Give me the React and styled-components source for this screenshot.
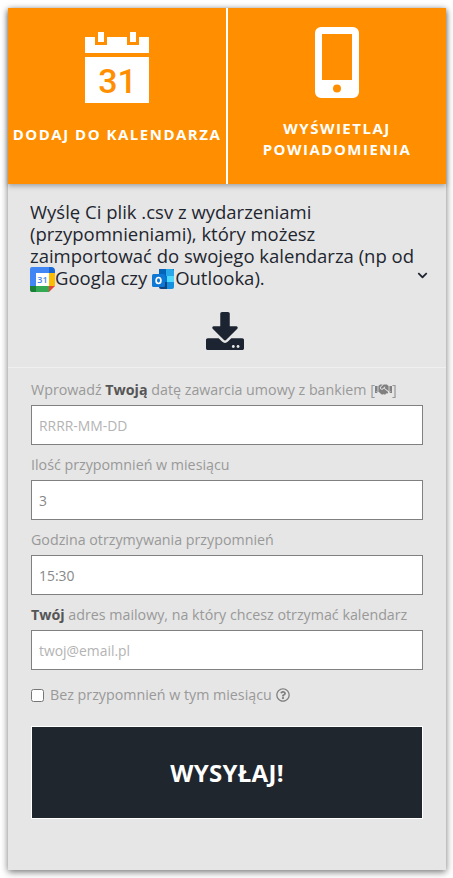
import React from "react";
import styled, { createGlobalStyle } from "styled-components";
import { FaDownload, FaHandshake, FaChevronDown, FaRegQuestionCircle } from "react-icons/fa";

const GlobalStyle = createGlobalStyle`
  * {
    box-sizing: border-box;
  }

  body {
    margin: 0;
    background: #fff;
    font-family: "Open Sans", "Liberation Sans", sans-serif;
  }
`;

const Page = styled.div`
  padding: 8px;
  min-height: 878px;
`;

const Card = styled.div`
  position: relative;
  width: 438px;
  height: 862px;
  background: #e6e6e6;
  box-shadow: 0 2px 7px rgba(0, 0, 0, 0.55);
`;

const Tabs = styled.div`
  display: grid;
  grid-template-columns: 218px 218px;
  gap: 2px;
  height: 176px;
  background: #fff;
  box-shadow: 0 2px 5px rgba(0, 0, 0, 0.3);
  position: relative;
`;

const Tab = styled.div`
  background: #ff8f00;
  color: #fff;
  display: flex;
  flex-direction: column;
  align-items: center;
  padding-top: ${(p) => p.$top}px;
`;

const TabLabel = styled.div`
  margin-top: ${(p) => p.$gap}px;
  font-size: 15px;
  line-height: 21px;
  font-weight: 700;
  letter-spacing: 1.5px;
  text-align: center;
  white-space: nowrap;
`;

const Intro = styled.div`
  position: relative;
  padding: 17px 22px 0;
  height: 184px;
  border-bottom: 1px solid #f0f0f0;
  display: flex;
  flex-direction: column;
`;

const IntroText = styled.p`
  margin: 0;
  font-size: 18.5px;
  line-height: 22px;
  color: #1f2630;
`;

const InlineIcon = styled.svg`
  display: inline-block;
  vertical-align: ${(p) => p.$align}px;
  margin-right: ${(p) => p.$right || 0}px;
`;

const Chevron = styled(FaChevronDown)`
  position: absolute;
  right: 18px;
  top: 86px;
  font-size: 11px;
  color: #1f2630;
`;

const DownloadRow = styled.div`
  display: flex;
  justify-content: center;
  margin-top: 20px;
  padding-right: 4px;
  color: #1b2430;
  font-size: 38px;
  line-height: 0;
`;

const Form = styled.form`
  padding: 9px 23px 0;
  display: flex;
  flex-direction: column;
`;

const Field = styled.div`
  display: flex;
  flex-direction: column;
  gap: 3px;
  margin-bottom: 7px;
`;

const Label = styled.label`
  font-size: 14.25px;
  line-height: 25px;
  color: #999;
  white-space: nowrap;

  b {
    color: #555;
    font-weight: 700;
  }
`;

const BankIcon = styled(FaHandshake)`
  font-size: 17px;
  color: #808080;
  vertical-align: -3px;
`;

const Input = styled.input`
  display: block;
  width: 100%;
  height: 40px;
  padding: 0 7px;
  background: #fff;
  border: 1px solid #808080;
  border-radius: 0;
  outline: none;
  font-family: inherit;
  font-size: 13.9px;
  color: #888;

  &::placeholder {
    color: #b3b3b3;
    opacity: 1;
  }
`;

const CheckRow = styled.div`
  display: flex;
  align-items: center;
  gap: 6px;
  margin-top: 5px;
  font-size: 14.25px;
  line-height: 25px;
  color: #999;
`;

const Check = styled.input`
  width: 13px;
  height: 13px;
  margin: 2px 0 0;
`;

const Help = styled(FaRegQuestionCircle)`
  font-size: 14px;
  color: #808080;
  margin-left: -2px;
`;

const Submit = styled.button`
  display: block;
  width: 100%;
  height: 93px;
  margin-top: 19px;
  background: #1f262e;
  border: 1px solid #fff;
  color: #fff;
  font-family: inherit;
  font-size: 24px;
  font-weight: 700;
  letter-spacing: 0.3px;
`;

function CalendarIcon() {
  return (
    <svg width="64" height="71" viewBox="0 0 64 71">
      <path fill="#fff" d="M0 5h10v8h12V5h20v8h12V5h10v16H0z" />
      <path fill="#fff" d="M13 0h6v10h-6zM45 0h6v10h-6z" />
      <rect y="25" width="64" height="46" fill="#fff" />
      <text
        x="32.500"
        y="61"
        fill="#ff8f00"
        fontFamily="Roboto, sans-serif"
        fontSize="34"
        fontWeight="500"
        textAnchor="middle"
      >
        31
      </text>
    </svg>
  );
}

function PhoneIcon() {
  return (
    <svg width="44" height="71" viewBox="0 0 44 71">
      <path
        fill="#fff"
        fillRule="evenodd"
        d="M6 0h32a6 6 0 0 1 6 6v59a6 6 0 0 1-6 6H6a6 6 0 0 1-6-6V6a6 6 0 0 1 6-6zM7 7v46h30V7zM22 57.500a4 4 0 1 0 0 8 4 4 0 0 0 0-8z"
      />
    </svg>
  );
}

function GoogleCalendarIcon() {
  return (
    <InlineIcon $align={-7} width="25" height="25" viewBox="0 0 25 25">
      <path fill="#4285f4" d="M2 0h17v6H6v13H0V2a2 2 0 0 1 2-2z" />
      <path fill="#1967d2" d="M19 0l0 6h6V4a4 4 0 0 0-4-4z" />
      <path fill="#fbbc04" d="M19 6h6v13h-6z" />
      <path fill="#34a853" d="M6 19h13v6H6z" />
      <path fill="#188038" d="M0 19h6v6H2a2 2 0 0 1-2-2z" />
      <path fill="#ea4335" d="M19 19h6l-6 6z" />
      <path fill="#fff" d="M6 6h13v13H6z" />
      <text x="12.500" y="16" fontSize="9" fontWeight="600" fill="#4285f4" textAnchor="middle">
        31
      </text>
    </InlineIcon>
  );
}

function OutlookIcon() {
  return (
    <InlineIcon $align={-4} $right={1} width="22" height="20" viewBox="0 0 22 20">
      <path fill="#0364b8" d="M7 0h15v7H7z" />
      <path fill="#28a8ea" d="M14 0h6a2 2 0 0 1 2 2v5h-8z" />
      <path fill="#0078d4" d="M7 7h15v6H7z" />
      <path fill="#50d9ff" d="M15 7h7v6h-7z" />
      <path fill="#14447d" d="M7 13h8v7H9a2 2 0 0 1-2-2z" />
      <path fill="#1490df" d="M15 13h7v5a2 2 0 0 1-2 2h-5z" />
      <rect y="5" width="13" height="13" rx="1.500" fill="#0f78d4" />
      <ellipse cx="6.500" cy="11.500" rx="2.400" ry="3" fill="none" stroke="#fff" strokeWidth="1.700" />
    </InlineIcon>
  );
}

export default function App() {
  return (
    <Page>
      <GlobalStyle />
      <Card>
        <Tabs>
          <Tab $top={24}>
            <CalendarIcon />
            <TabLabel $gap={21}>DODAJ DO KALENDARZA</TabLabel>
          </Tab>
          <Tab $top={19}>
            <PhoneIcon />
            <TabLabel $gap={20}>
              WYŚWIETLAJ
              <br />
              POWIADOMIENIA
            </TabLabel>
          </Tab>
        </Tabs>
        <Intro>
          <IntroText>
            Wyślę Ci plik .csv z wydarzeniami (przypomnieniami), który możesz zaimportować do swojego kalendarza (np od{" "}
            <GoogleCalendarIcon />
            Googla czy <OutlookIcon />
            Outlooka).
          </IntroText>
          <Chevron />
          <DownloadRow>
            <FaDownload />
          </DownloadRow>
        </Intro>
        <Form>
          <Field>
            <Label>
              Wprowadź <b>Twoją</b> datę zawarcia umowy z bankiem [<BankIcon />]
            </Label>
            <Input placeholder="RRRR-MM-DD" />
          </Field>
          <Field>
            <Label>Ilość przypomnień w miesiącu</Label>
            <Input defaultValue="3" />
          </Field>
          <Field>
            <Label>Godzina otrzymywania przypomnień</Label>
            <Input defaultValue="15:30" />
          </Field>
          <Field>
            <Label>
              <b>Twój</b> adres mailowy, na który chcesz otrzymać kalendarz
            </Label>
            <Input placeholder="twoj@email.pl" />
          </Field>
          <CheckRow>
            <Check type="checkbox" />
            Bez przypomnień w tym miesiącu
            <Help />
          </CheckRow>
          <Submit type="button">WYSYŁAJ!</Submit>
        </Form>
      </Card>
    </Page>
  );
}
